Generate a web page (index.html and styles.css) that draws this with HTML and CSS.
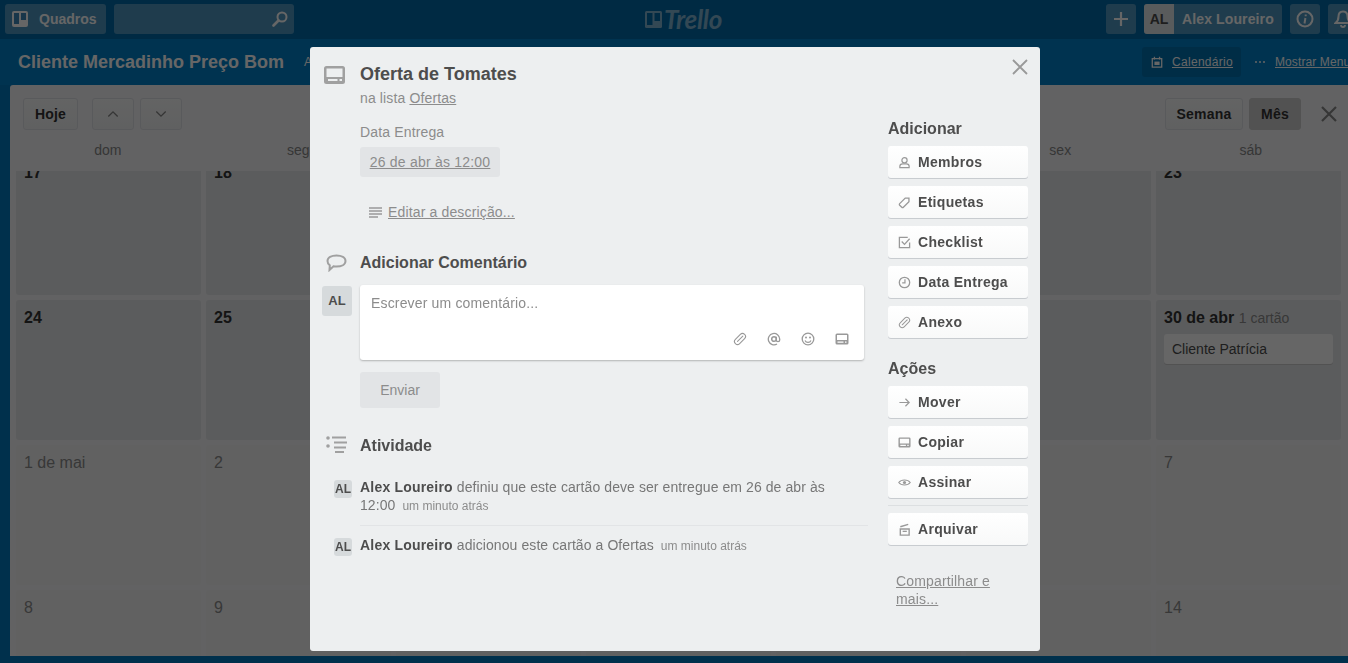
FILE: index.html
```html
<!DOCTYPE html>
<html lang="pt-BR">
<head>
<meta charset="utf-8">
<title>Oferta de Tomates</title>
<link rel="stylesheet" href="styles.css">
</head>
<body>
<svg class="defs" aria-hidden="true">
  <symbol id="i-card" viewBox="0 0 21 18"><path fill-rule="evenodd" fill="currentColor" d="M2.500 0h16A2.500 2.500 0 0 1 21 2.500v13a2.500 2.500 0 0 1-2.500 2.500h-16A2.500 2.500 0 0 1 0 15.500v-13A2.500 2.500 0 0 1 2.500 0zM2.500 2.500v8.500h16V2.500zM4 13v2h9.500v-2zM15.500 13v2h2.500v-2z"/></symbol>
  <symbol id="i-clip" viewBox="0 0 14 14"><g transform="rotate(45 7 7)" fill="none" stroke="currentColor" stroke-width="1.100" stroke-linecap="round"><path d="M4 10.500V3.500a3 3 0 0 1 6 0v7a3 3 0 0 1-6 0"/><path d="M7 3v7.500"/></g></symbol>
  <symbol id="i-at" viewBox="0 0 14 14"><circle cx="7" cy="7" r="2.300" fill="none" stroke="currentColor" stroke-width="1.500"/><path d="M9.300 4.700V8a1.700 1.700 0 0 0 3.400 0V7A5.700 5.700 0 1 0 10 12" fill="none" stroke="currentColor" stroke-width="1.300"/></symbol>
  <symbol id="i-smile" viewBox="0 0 14 14"><circle cx="7" cy="7" r="5.800" fill="none" stroke="currentColor" stroke-width="1.300"/><circle cx="5" cy="5.500" r="1" fill="currentColor"/><circle cx="9" cy="5.500" r="1" fill="currentColor"/><path d="M4 8.500a3.300 3.300 0 0 0 6 0" fill="none" stroke="currentColor" stroke-width="1.200"/></symbol>
  <symbol id="i-box" viewBox="0 0 14 14"><path fill-rule="evenodd" fill="currentColor" d="M2 1.500h10A1.500 1.500 0 0 1 13.500 3v8a1.500 1.500 0 0 1-1.500 1.500H2A1.500 1.500 0 0 1 .5 11V3A1.500 1.500 0 0 1 2 1.500zM2 3v5h10V3zM2.500 9.500v1.200h6V9.500zM10 9.500v1.200h1.500V9.500z"/></symbol>
  <symbol id="i-user" viewBox="0 0 14 14"><circle cx="7" cy="4.500" r="2.800" fill="none" stroke="currentColor" stroke-width="1.300"/><path d="M2 12.500V11c0-1.500 1.500-2.600 3-2.600h4c1.500 0 3 1.100 3 2.600v1.500z" fill="none" stroke="currentColor" stroke-width="1.300"/></symbol>
  <symbol id="i-tag" viewBox="0 0 14 14"><path d="M1.800 8.200 7.800 2.200h4v4l-6 6a1.200 1.200 0 0 1-1.700 0l-2.300-2.300a1.200 1.200 0 0 1 0-1.700z" fill="none" stroke="currentColor" stroke-width="1.400"/></symbol>
  <symbol id="i-check" viewBox="0 0 14 14"><path d="M12.500 7v5.500h-11v-11h9" fill="none" stroke="currentColor" stroke-width="1.400"/><path d="M4 6l3 3 5.500-6" fill="none" stroke="currentColor" stroke-width="1.400"/></symbol>
  <symbol id="i-clock" viewBox="0 0 14 14"><circle cx="7" cy="7" r="5.600" fill="none" stroke="currentColor" stroke-width="1.400"/><path d="M7.500 3.500V7.500H4.500" fill="none" stroke="currentColor" stroke-width="1.300"/></symbol>
  <symbol id="i-arrow" viewBox="0 0 14 14"><path d="M1.500 7h10.500M8 3l4 4-4 4" fill="none" stroke="currentColor" stroke-width="1.300"/></symbol>
  <symbol id="i-eye" viewBox="0 0 14 14"><path d="M.8 7C3.500 3.400 10.500 3.400 13.200 7 10.500 10.600 3.500 10.600.8 7z" fill="none" stroke="currentColor" stroke-width="1.200"/><circle cx="7" cy="7" r="1.700" fill="currentColor"/></symbol>
  <symbol id="i-archive" viewBox="0 0 14 14"><path d="M2.500 4 11 1.500M2.500 6.500h9.500v6.500H2.500z" fill="none" stroke="currentColor" stroke-width="1.500"/><rect x="5" y="8.300" width="4.500" height="1.400" fill="currentColor"/></symbol>
</svg>

<div class="app">
  <header class="topbar">
    <a class="tb-btn tb-boards">
      <svg class="ic-boards" viewBox="0 0 16 16"><rect width="16" height="16" rx="2" fill="currentColor"/><rect x="2" y="2" width="5" height="11" fill="#3e88b8"/><rect x="9" y="2" width="5" height="7" fill="#3e88b8"/></svg>
      <span>Quadros</span>
    </a>
    <div class="tb-btn tb-search">
      <svg class="ic-search" viewBox="0 0 16 16"><circle cx="10" cy="6" r="4.500" fill="none" stroke="currentColor" stroke-width="2"/><path d="M6.500 9.500 1.500 14.500" stroke="currentColor" stroke-width="2.600" stroke-linecap="round"/></svg>
    </div>
    <div class="logo">
      <svg class="logo-mark" viewBox="0 0 17 17"><rect width="17" height="17" rx="1.500" fill="currentColor"/><rect x="2" y="2" width="5.500" height="12" fill="#026aa7"/><rect x="9.500" y="2" width="5.500" height="8" fill="#026aa7"/></svg>
      <span class="logo-word">Trello</span>
    </div>
    <a class="tb-btn tb-square tb-plus"><svg class="ic-plus" viewBox="0 0 16 16"><path d="M8 1v14M1 8h14" stroke="currentColor" stroke-width="2.200"/></svg></a>
    <a class="tb-btn tb-user"><span class="tb-avatar">AL</span><span class="tb-name">Alex Loureiro</span></a>
    <a class="tb-btn tb-square"><svg class="ic-info" viewBox="0 0 18 18"><circle cx="9" cy="9" r="7.500" fill="none" stroke="currentColor" stroke-width="2"/><path d="M9.700 4.500v1.800M9.400 8 8.500 13.500" stroke="currentColor" stroke-width="2"/></svg></a>
    <a class="tb-btn tb-square tb-bell"><svg class="ic-bell" viewBox="0 0 18 18"><path d="M9 1.500c-3 0-4.500 2.300-4.500 5 0 3-1 5-3 6.500h15c-2-1.500-3-3.500-3-6.500 0-2.700-1.500-5-4.500-5z" fill="none" stroke="currentColor" stroke-width="2"/><path d="M7 15a2 2 0 0 0 4 0" fill="none" stroke="currentColor" stroke-width="1.800"/></svg></a>
  </header>

  <div class="board-head">
    <h1 class="board-title">Cliente Mercadinho Preço Bom</h1>
    <span class="board-org">A</span>
    <a class="power"><svg class="ic-cal" viewBox="0 0 14 14"><path d="M1.500 3h11v10h-11z" fill="none" stroke="currentColor" stroke-width="1.500"/><path d="M4 1v3M10 1v3" stroke="currentColor" stroke-width="1.500"/><rect x="4" y="6.500" width="6" height="4" fill="currentColor"/></svg><u>Calendário</u></a>
    <a class="show-menu"><svg class="ic-dots" viewBox="0 0 10 2"><circle cx="1" cy="1" r="1" fill="currentColor"/><circle cx="5" cy="1" r="1" fill="currentColor"/><circle cx="9" cy="1" r="1" fill="currentColor"/></svg><u>Mostrar Menu</u></a>
  </div>

  <main class="calendar">
    <div class="cal-tools">
      <button class="cal-btn cal-today">Hoje</button>
      <button class="cal-btn cal-nav"><svg viewBox="0 0 14 8"><path d="M1.500 7 7 1.500 12.500 7" fill="none" stroke="currentColor" stroke-width="1.600"/></svg></button>
      <button class="cal-btn cal-nav"><svg viewBox="0 0 14 8"><path d="M1.500 1 7 6.500 12.500 1" fill="none" stroke="currentColor" stroke-width="1.600"/></svg></button>
      <span class="spacer"></span>
      <button class="cal-btn cal-week">Semana</button>
      <button class="cal-btn cal-month">Mês</button>
      <svg class="cal-close" viewBox="0 0 16 16"><path d="M1 1l14 14M15 1 1 15" stroke="currentColor" stroke-width="2.200"/></svg>
    </div>
    <div class="dows"><span>dom</span><span>seg</span><span></span><span></span><span></span><span>sex</span><span>sáb</span></div>
    <div class="cal-scroll">
      <div class="cal-grid">
        <div class="cell cur"><b>17</b></div><div class="cell cur"><b>18</b></div><div class="cell cur"></div><div class="cell cur"></div><div class="cell cur"></div><div class="cell cur"></div><div class="cell cur"><b>23</b></div>
        <div class="cell cur"><b>24</b></div><div class="cell cur"><b>25</b></div><div class="cell cur"></div><div class="cell cur"></div><div class="cell cur"></div><div class="cell cur"></div>
        <div class="cell cur"><b>30 de abr</b> <span class="count">1 cartão</span><div class="mini-card">Cliente Patrícia</div></div>
        <div class="cell">1 de mai</div><div class="cell">2</div><div class="cell"></div><div class="cell"></div><div class="cell"></div><div class="cell"></div><div class="cell">7</div>
        <div class="cell">8</div><div class="cell">9</div><div class="cell"></div><div class="cell"></div><div class="cell"></div><div class="cell"></div><div class="cell">14</div>
      </div>
    </div>
  </main>
</div>

<div class="overlay"></div>

<section class="modal">
  <svg class="modal-close" viewBox="0 0 16 16"><path d="M1 1l14 14M15 1 1 15" stroke="currentColor" stroke-width="1.800"/></svg>
  <div class="modal-main">
    <div class="row head-row">
      <svg class="sec-icon ic-card"><use href="#i-card"/></svg>
      <div>
        <h2 class="card-title">Oferta de Tomates</h2>
        <p class="in-list">na lista <u>Ofertas</u></p>
      </div>
    </div>
    <div class="indent">
      <p class="due-label">Data Entrega</p>
      <a class="due-chip"><u>26 de abr às 12:00</u></a>
      <a class="edit-desc">
        <svg class="ic-lines" viewBox="0 0 13 11"><path d="M0 1h13M0 4h13M0 7h13M0 10h9" stroke="currentColor" stroke-width="1.400"/></svg>
        <u>Editar a descrição...</u>
      </a>
    </div>
    <div class="row sec-row sec-comment">
      <svg class="sec-icon ic-bubble" viewBox="0 0 21 18"><path d="M10.500 1.500c5 0 9 1.900 9 5.500s-4 5.500-9 5.500c-1 0-2 0-3-.2L3.500 16l.3-4.700C2.300 10.300 1.500 8.800 1.500 7c0-3.600 4-5.500 9-5.500z" fill="none" stroke="currentColor" stroke-width="2"/></svg>
      <h3 class="sec-title">Adicionar Comentário</h3>
    </div>
    <div class="comment-row">
      <span class="avatar avatar-lg">AL</span>
      <div class="comment-col">
        <div class="comment-box">
          <p class="placeholder">Escrever um comentário...</p>
          <div class="comment-icons">
            <svg><use href="#i-clip"/></svg>
            <svg><use href="#i-at"/></svg>
            <svg><use href="#i-smile"/></svg>
            <svg><use href="#i-box"/></svg>
          </div>
        </div>
        <button class="send">Enviar</button>
      </div>
    </div>
    <div class="row sec-row sec-activity">
      <svg class="sec-icon ic-activity" viewBox="0 0 21 17"><path d="M6 1.500h14M8 6.500h13M8 11.500h12M9 16h9" stroke="currentColor" stroke-width="2"/><circle cx="2" cy="2" r="1.800" fill="currentColor"/><circle cx="2" cy="10" r="1.800" fill="currentColor"/></svg>
      <h3 class="sec-title">Atividade</h3>
    </div>
    <div class="activity">
      <article class="act act-first">
        <span class="avatar avatar-sm">AL</span>
        <p><b>Alex Loureiro</b> definiu que este cartão deve ser entregue em 26 de abr às 12:00 <small>um minuto atrás</small></p>
      </article>
      <article class="act">
        <span class="avatar avatar-sm">AL</span>
        <p><b>Alex Loureiro</b> adicionou este cartão a Ofertas <small>um minuto atrás</small></p>
      </article>
    </div>
  </div>
  <aside class="side">
    <h3 class="side-title">Adicionar</h3>
    <a class="side-btn"><svg><use href="#i-user"/></svg>Membros</a>
    <a class="side-btn"><svg><use href="#i-tag"/></svg>Etiquetas</a>
    <a class="side-btn"><svg><use href="#i-check"/></svg>Checklist</a>
    <a class="side-btn"><svg><use href="#i-clock"/></svg>Data Entrega</a>
    <a class="side-btn"><svg><use href="#i-clip"/></svg>Anexo</a>
    <h3 class="side-title side-title-2">Ações</h3>
    <a class="side-btn"><svg><use href="#i-arrow"/></svg>Mover</a>
    <a class="side-btn"><svg><use href="#i-box"/></svg>Copiar</a>
    <a class="side-btn"><svg><use href="#i-eye"/></svg>Assinar</a>
    <hr class="side-sep">
    <a class="side-btn"><svg><use href="#i-archive"/></svg>Arquivar</a>
    <a class="share"><u>Compartilhar e mais...</u></a>
  </aside>
</section>
</body>
</html>
```
FILE: styles.css
```css
* { box-sizing: border-box; }
html, body { margin: 0; height: 100%; overflow: hidden; }
body { font: 14px/18px "Liberation Sans", Arial, sans-serif; color: #4d4d4d; background: #0079bf; }
h1, h2, h3, p { margin: 0; }
.defs { display: none; }
.app { height: 663px; display: flex; flex-direction: column; background: #0079bf; }

/* top bar */
.topbar { height: 39px; flex: none; background: #026aa7; padding: 4px 0 0 5px; display: flex; align-items: flex-start; color: #fff; position: relative; overflow: hidden; }
.tb-btn { height: 30px; flex: none; background: rgba(255,255,255,.3); border-radius: 3px; color: #fff; display: flex; align-items: center; font-weight: 700; }
.tb-boards { width: 101px; padding-left: 7px; margin-right: 8px; }
.ic-boards { width: 16px; height: 16px; margin-right: 11px; }
.tb-search { width: 180px; justify-content: flex-end; padding-right: 6px; }
.ic-search { width: 16px; height: 16px; }
.logo { position: absolute; left: 645px; top: 8px; display: flex; align-items: center; color: rgba(255,255,255,.5); }
.logo-mark { width: 17px; height: 17px; margin-right: 2px; }
.logo-word { font: italic 700 26px/22px "Lato", sans-serif; letter-spacing: -.3px; }
.tb-square { width: 30px; justify-content: center; }
.tb-plus { margin-left: 812px; margin-right: 8px; }
.ic-plus { width: 16px; height: 16px; }
.tb-user { width: 138px; margin-right: 8px; }
.tb-avatar { width: 30px; height: 30px; background: #dfe3e6; color: #4d4d4d; font-weight: 700; text-align: center; line-height: 30px; border-radius: 3px 0 0 3px; margin-right: 8px; font-size: 14px; }
.tb-name { letter-spacing: .12px; white-space: nowrap; }
.ic-info { width: 18px; height: 18px; }
.tb-bell { margin-left: 8px; }
.ic-bell { width: 18px; height: 18px; }

/* board head */
.board-head { height: 46px; flex: none; display: flex; align-items: center; color: #fff; background: #0080c8; position: relative; white-space: nowrap; overflow: hidden; }
.board-title { font-size: 18px; line-height: 24px; font-weight: 700; margin-left: 18px; }
.board-org { margin-left: 20px; font-size: 12px; }
.power { margin-left: auto; width: 99px; height: 30px; background: rgba(0,0,0,.12); border-radius: 3px; display: flex; align-items: center; padding-left: 9px; font-size: 12px; letter-spacing: .3px; }
.ic-cal { width: 12px; height: 12px; margin-right: 9px; flex: none; }
.show-menu { flex: none; width: 107px; margin-left: 14px; margin-right: -14px; font-size: 12px; letter-spacing: .1px; display: flex; align-items: center; }
.ic-dots { width: 10px; height: 2px; margin-right: 10px; flex: none; }

/* calendar */
.calendar { flex: none; height: 571px; margin-left: 10px; background: #f4f5f7; border-radius: 3px 0 0 0; display: flex; flex-direction: column; overflow: hidden; color: #4d4d4d; }
.cal-tools { height: 45px; flex: none; padding: 13px 11px 0 13px; display: flex; align-items: flex-start; }
.cal-btn { height: 32px; padding: 0; font: 700 14px/32px "Liberation Sans", Arial, sans-serif; background: #fff linear-gradient(#f8f9f9,#f0f1f2); color: #333; border: 1px solid #dfe1e6; border-radius: 3px; display: flex; align-items: center; justify-content: center; letter-spacing: .2px; }
.cal-today { width: 55px; margin-right: 14px; }
.cal-nav { width: 42px; margin-right: 6px; color: #888; }
.cal-nav svg { width: 12px; height: 8px; }
.spacer { flex: 1; }
.cal-week { width: 78px; margin-right: 6px; }
.cal-month { width: 52px; background: #ccc; border-color: #ccc; margin-right: 20px; }
.cal-close { width: 16px; height: 16px; margin-top: 8px; color: #888; }
.dows { display: grid; grid-template-columns: repeat(7, 1fr); gap: 5px; padding: 11px 4.500px 0 5px; height: 41px; flex: none; line-height: 18px; color: #888; text-align: center; }
.cal-scroll { flex: 1; overflow: hidden; padding: 0 7px 0 6px; }
.cal-grid { display: grid; grid-template-columns: repeat(7, 1fr); grid-auto-rows: 140px; gap: 5px; margin-top: -16px; }
.cell { border-radius: 3px; padding: 8px; background: #f2f3f3; color: #8c8c8c; font-size: 16px; line-height: 20px; }
.cell.cur { background: #e4e6e8; color: #333; }
.count { font-size: 14px; color: #8c8c8c; }
.mini-card { margin-top: 6px; height: 30px; background: #fff; border-radius: 3px; box-shadow: 0 1px 0 #ccc; font-size: 14px; line-height: 30px; padding-left: 8px; color: #4d4d4d; }

/* overlay */
.overlay { position: fixed; inset: 0; background: rgba(0,0,0,.6); }

/* modal */
.modal { position: absolute; left: 310px; top: 47px; width: 730px; height: 604px; background: #edeff0; border-radius: 3px; padding: 0 12px; display: flex; color: #8c8c8c; }
.modal-close { position: absolute; right: 12px; top: 12px; width: 16px; height: 16px; color: #999; }
.modal-main { width: 546px; flex: none; margin-right: 20px; }
.row { display: flex; align-items: flex-start; }
.sec-icon { flex: none; color: #a0a0a0; }
.head-row { padding: 15px 0 0 2px; }
.ic-card { width: 21px; height: 18px; margin: 4px 15px 0 0; }
.card-title { font-size: 18px; line-height: 24px; font-weight: 700; color: #4d4d4d; }
.in-list { margin-top: 2px; line-height: 20px; letter-spacing: .13px; }
.indent { padding-left: 38px; letter-spacing: .15px; }
.due-label { margin-top: 14px; line-height: 20px; }
.due-chip { display: inline-block; margin-top: 5px; height: 30px; width: 140px; background: #e2e4e6; border-radius: 3px; line-height: 30px; text-align: center; letter-spacing: .22px; }
.edit-desc { display: flex; align-items: center; margin: 26px 0 0 9px; height: 18px; }
.ic-lines { width: 13px; height: 11px; margin-right: 6px; color: #999; }
.sec-row h3 { font-size: 16px; line-height: 20px; font-weight: 700; color: #4d4d4d; padding-top: 1px; margin-bottom: -1px; }
.sec-comment { margin: 31px 0 0 4px; }
.ic-bubble { width: 21px; height: 18px; margin: 2px 13px 0 0; }
.comment-row { display: flex; margin-top: 13px; }
.avatar { background: #d6dadc; color: #4d4d4d; font-weight: 700; border-radius: 3px; text-align: center; flex: none; }
.avatar-lg { width: 30px; height: 30px; line-height: 29px; font-size: 13px; margin: 1px 8px 0 0; }
.comment-col { flex: 1; }
.comment-box { position: relative; width: 504px; height: 75px; background: #fff; border-radius: 3px; box-shadow: 0 1px 2px rgba(0,0,0,.25); padding: 9px 11px; }
.placeholder { line-height: 18px; letter-spacing: .16px; }
.comment-icons { position: absolute; right: 15px; bottom: 14px; display: flex; gap: 20px; color: #999; }
.comment-icons svg { width: 14px; height: 14px; }
.send { display: block; margin-top: 12px; width: 80px; height: 36px; border: 0; padding: 0; background: #e2e4e6; border-radius: 3px; color: #8c8c8c; font: 14px "Liberation Sans", Arial, sans-serif; }
.sec-activity { margin: 27px 0 0 4px; }
.ic-activity { width: 21px; height: 17px; margin: 1px 13px 0 0; }
.activity { margin-top: 23px; padding-left: 12px; }
.act { display: flex; width: 534px; }
.act .avatar-sm { width: 18px; height: 18px; line-height: 19px; font-size: 12px; margin: 2px 8px 0 0; }
.act p { flex: 1; line-height: 18px; color: #777; letter-spacing: .08px; padding-right: 6px; }
.act-first p { border-bottom: 1px solid #e2e4e6; margin-bottom: 10px; padding-bottom: 11px; }
.act b { color: #4d4d4d; letter-spacing: .2px; }
.act small { font-size: 12px; line-height: 1; margin-left: 3px; color: #8c8c8c; letter-spacing: 0; }

/* side column */
.side { width: 140px; flex: none; padding-top: 72px; }
.side-title { font-size: 16px; line-height: 20px; font-weight: 700; color: #4d4d4d; margin-bottom: 7px; }
.side-title-2 { margin-top: 21px; margin-bottom: 7px; }
.side-btn { display: flex; align-items: center; height: 32px; margin-bottom: 8px; padding-left: 10px; background: #fff linear-gradient(#fff,#f8f9f9); border-radius: 3px; box-shadow: 0 1px 0 #c8ccd0; font-weight: 700; color: #4d4d4d; letter-spacing: .3px; }
.side-btn svg { width: 13px; height: 13px; margin-right: 7px; color: #999; flex: none; }
.side-sep { height: 1px; border: 0; background: #dcdfe1; margin: -1px 0 7px; }
.share { display: block; margin: 27px 0 0 8px; width: 110px; line-height: 18px; letter-spacing: .15px; }
```
